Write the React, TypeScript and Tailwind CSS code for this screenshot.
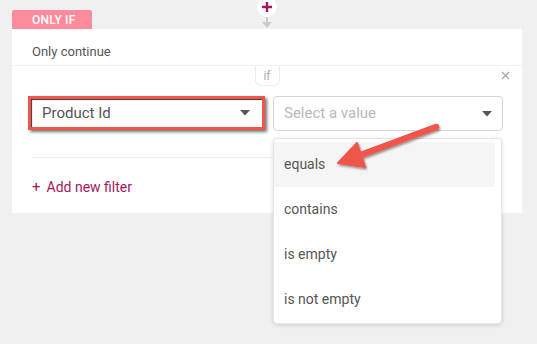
import type { FC } from "react";

const options = ["equals", "contains", "is empty", "is not empty"];

const Caret: FC = () => (
  <svg width="10" height="6" viewBox="0 0 10 6">
    <path d="M0 0h10L5 5.5z" fill="#555" />
  </svg>
);

const App: FC = () => {
  return (
    <div
      className="relative w-[537px] h-[344px] bg-[#f0f0f0] overflow-hidden"
      style={{ fontFamily: "Roboto, 'Liberation Sans', sans-serif" }}
    >
      <div className="pl-[12px] w-[522px]">
        {/* header tab */}
        <div className="relative h-[29px] flex items-end">
          <div className="w-[80px] h-[19px] bg-[#ff8a9b] rounded-t-[2px] text-white text-[12px] font-medium flex items-center pl-[20px] tracking-[0.2px]">
            ONLY IF
          </div>
          <div className="absolute left-[245px] top-[-3px] w-[20px] h-[20px] rounded-full bg-white flex items-center justify-center">
            <svg width="12" height="12" viewBox="0 0 12 12">
              <path d="M6 1v10M1 6h10" stroke="#a3195b" strokeWidth="2.4" />
            </svg>
          </div>
          <div className="absolute left-[248px] top-[17px]">
            <svg width="14" height="12" viewBox="0 0 14 12">
              <path d="M7 0v6" stroke="#c3ccd3" strokeWidth="2" />
              <path d="M2 5h10L7 11z" fill="#c3ccd3" />
            </svg>
          </div>
        </div>

        {/* card */}
        <div className="bg-white w-[510px] h-[184px] flex flex-col">
          <div className="h-[37px] border-b border-[#f2f2f2] pt-[14px] pl-[20px] text-[13px] leading-[18px] text-[#555]">
            Only continue
          </div>
          <div className="relative h-[20px] flex justify-center">
            <div className="w-[25px] h-[20px] border border-t-0 border-[#eeeeee] rounded-b-[6px] flex items-center justify-center text-[12px] text-[#aaa]">
              if
            </div>
            <svg
              className="absolute right-[12px] top-[5px]"
              width="9"
              height="9"
              viewBox="0 0 9 9"
            >
              <path d="M1 1l7 7M8 1L1 8" stroke="#a8a8a8" strokeWidth="1.3" />
            </svg>
          </div>
          <div className="mt-[10px] flex gap-[8px] pl-[16px]">
            <div className="w-[237px] h-[34px] border-[3px] border-[#f0554c] bg-white flex items-center justify-between pl-[11px] pr-[12px] shadow-[inset_1px_1px_1px_#333,2px_2px_3px_rgba(0,0,0,0.55)]">
              <span className="text-[15px] text-[#555]">Product Id</span>
              <Caret />
            </div>
            <div className="w-[230px] h-[35px] border border-[#d6d6d6] rounded-[4px] bg-white flex items-center justify-between pl-[10px] pr-[10px]">
              <span className="text-[15px] text-[#b9b9b9]">Select a value</span>
              <Caret />
            </div>
          </div>
          <div className="ml-[20px] mt-[26px] w-[250px] border-t border-[#ececec]" />
          <div className="mt-[19px] pl-[20px] text-[14px] text-[#a3195b] flex items-center gap-[6px]">
            <span className="text-[15px] leading-none">+</span>
            <span>Add new filter</span>
          </div>
        </div>
      </div>

      {/* dropdown menu */}
      <div className="absolute left-[273px] top-[138px] w-[229px] h-[186px] bg-white border border-[#e6e6e6] rounded-[4px] shadow-[0_1px_4px_rgba(0,0,0,0.15)] pt-[3px] pr-[6px]">
        {options.map((o, i) => (
          <div
            key={o}
            className={`h-[45px] flex items-center pl-[10px] text-[14px] text-[#555] ${
              i === 0 ? "bg-[#f5f5f5]" : ""
            }`}
          >
            {o}
          </div>
        ))}
      </div>

      {/* annotation arrow */}
      <svg
        className="absolute left-[330px] top-[115px]"
        width="120"
        height="60"
        viewBox="0 0 120 60"
      >
        <defs>
          <filter id="sh" x="-20%" y="-20%" width="140%" height="140%">
            <feDropShadow dx="1" dy="1.5" stdDeviation="1" floodColor="#000" floodOpacity="0.45" />
          </filter>
        </defs>
        <g filter="url(#sh)">
          <path d="M106 12L28 41" stroke="#f0554c" strokeWidth="6.5" strokeLinecap="round" />
          <path d="M8 48L27 28L35 52z" fill="#f0554c" stroke="#f0554c" strokeWidth="2" strokeLinejoin="round" />
        </g>
      </svg>
    </div>
  );
};

export default App;
